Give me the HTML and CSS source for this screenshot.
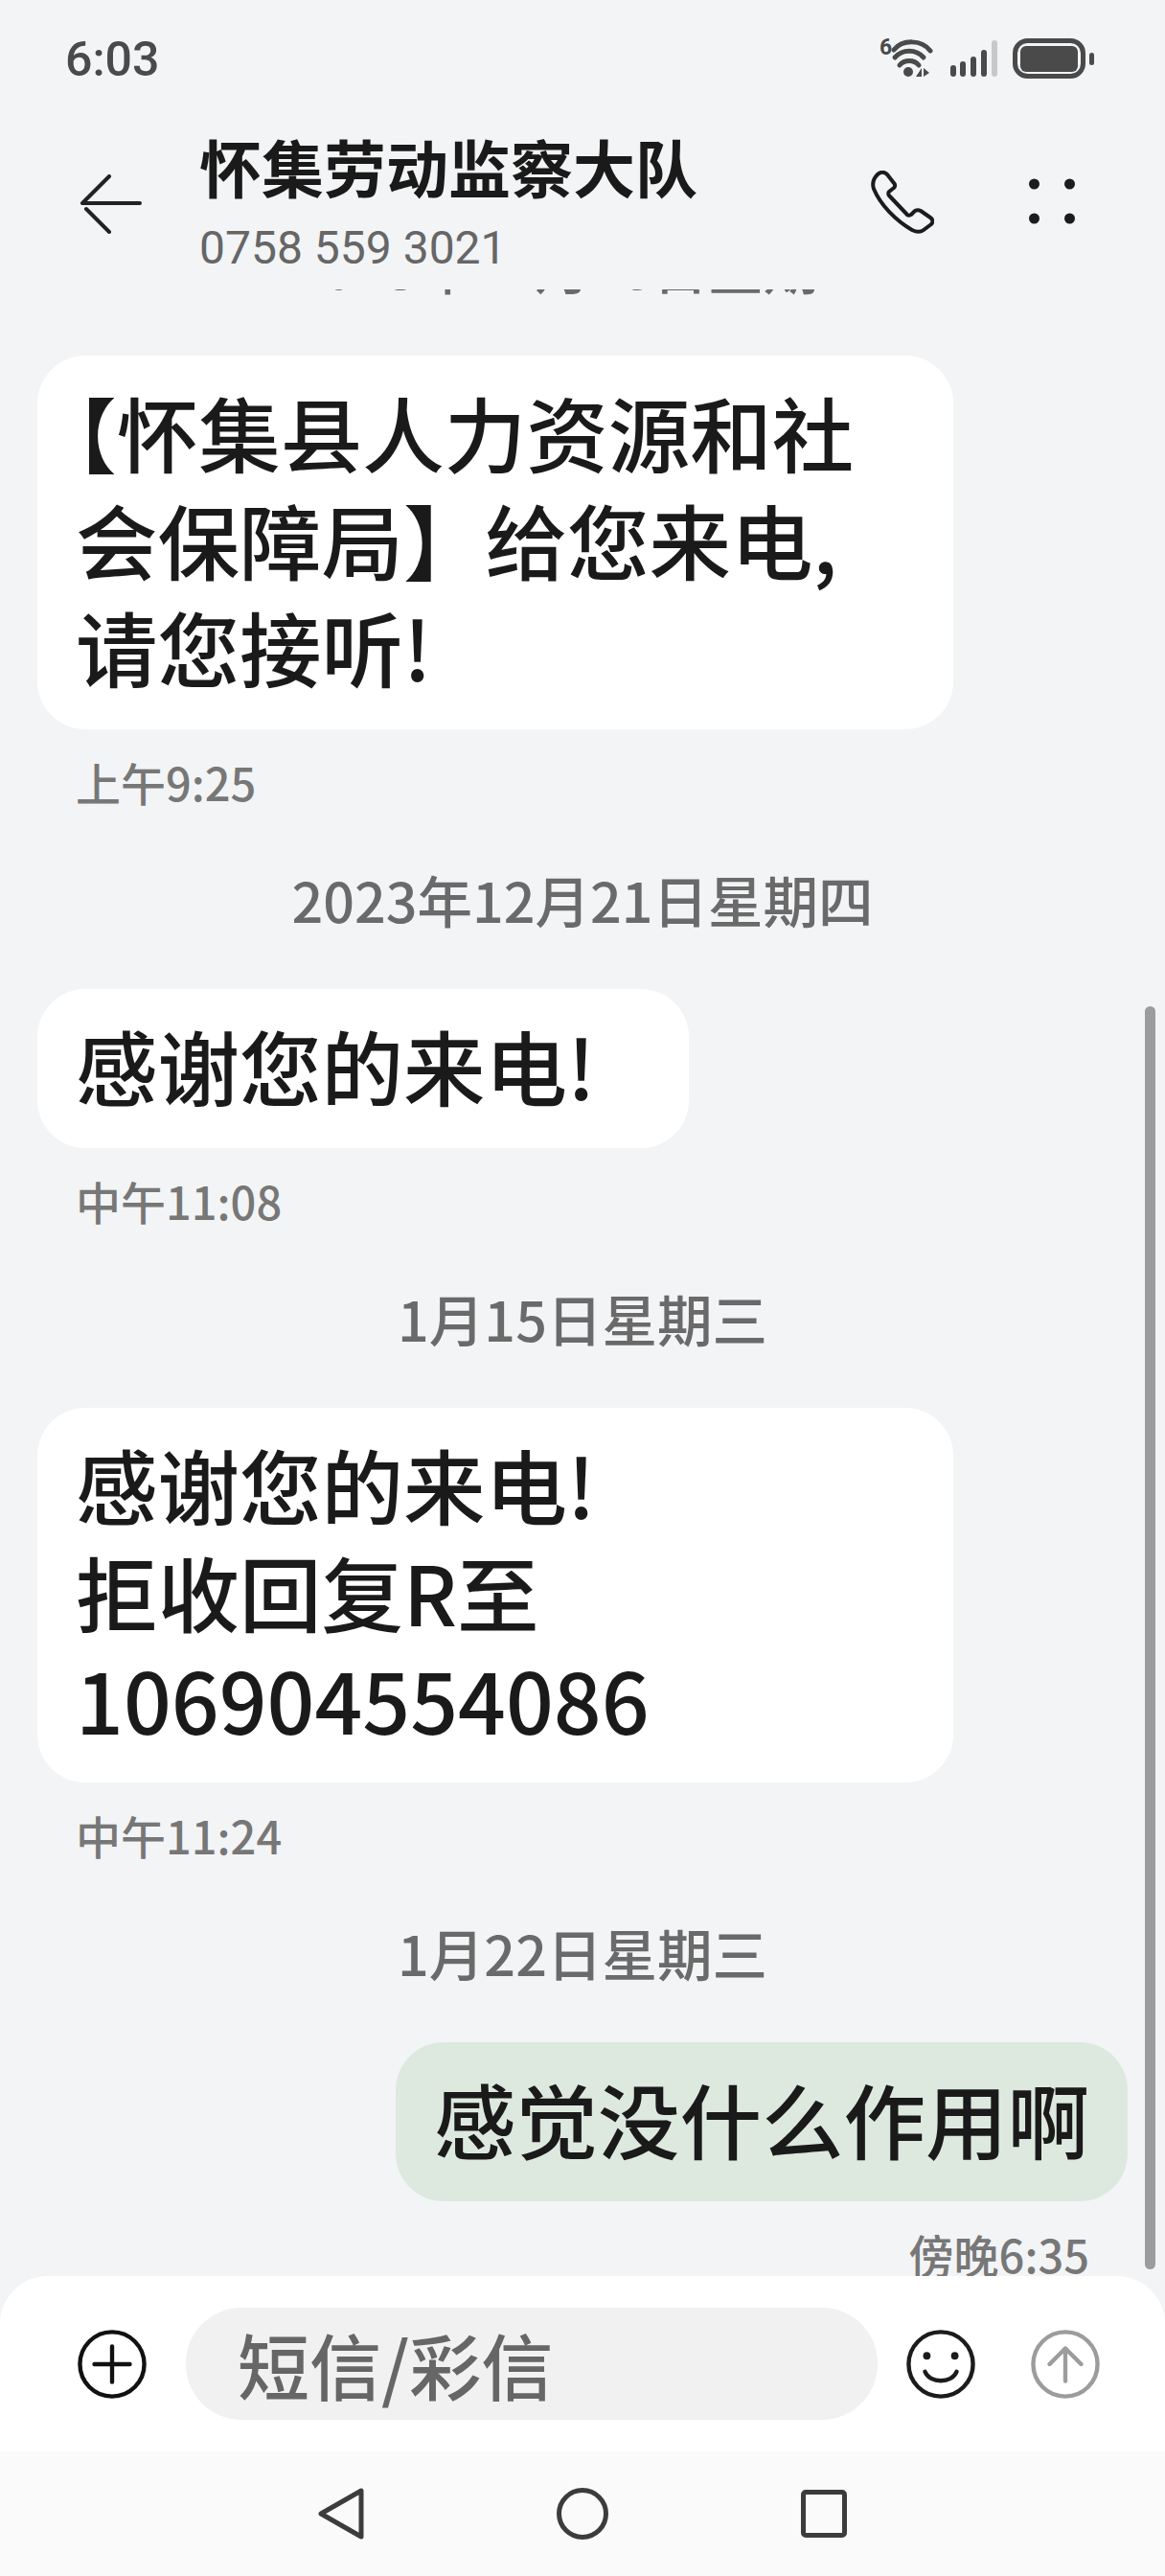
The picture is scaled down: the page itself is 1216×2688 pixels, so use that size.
FILE: index.html
```html
<!DOCTYPE html>
<html lang="zh-CN">
<head>
<meta charset="utf-8">
<title>怀集劳动监察大队</title>
<link rel="stylesheet" href="styles.css">
</head>
<body>
<div class="screen">
  <div class="statusbar">
    <span class="clock">6:03</span>
    <svg class="status-icons" width="232" height="50" viewBox="0 0 232 50">
      <text x="0" y="17" class="net-six">6</text>
      <g fill="none" stroke="#4a4a4a" stroke-width="5" stroke-linecap="round">
        <path d="M15 12 C24 1 44 1 53 13"/>
        <path d="M16 20 C24 11 38 11 46 20"/>
        <path d="M21 28 C26 22 36 22 41 28"/>
      </g>
      <circle cx="30" cy="35" r="5" fill="#4a4a4a"/>
      <path d="M38 40 L44 31 V40 Z M46 31 L52 36 L46 40 Z" fill="#4a4a4a"/>
      <g fill="#4a4a4a">
        <rect x="74" y="28" width="6" height="12" rx="3"/>
        <rect x="84" y="24" width="6" height="16" rx="3"/>
        <rect x="95" y="19" width="6" height="21" rx="3"/>
        <rect x="106" y="12" width="6" height="28" rx="3"/>
      </g>
      <rect x="117" y="2" width="6" height="38" rx="3" fill="#c8c8c8"/>
      <rect x="141.500" y="2.500" width="71" height="37" rx="13" fill="none" stroke="#4a4a4a" stroke-width="5"/>
      <rect x="147" y="8" width="60" height="27" rx="6" fill="#4a4a4a"/>
      <rect x="219" y="15" width="5" height="13" rx="2.500" fill="#4a4a4a"/>
    </svg>
  </div>
  <header class="topbar">
    <svg class="back-icon" width="66" height="62" viewBox="0 0 66 62">
      <path d="M31 2 L3 30 H63 M7 36 L31 60" fill="none" stroke="#222" stroke-width="4" stroke-linecap="round" stroke-linejoin="round"/>
    </svg>
    <div class="contact">
      <div class="contact-name">怀集劳动监察大队</div>
      <div class="contact-number">0758 559 3021</div>
    </div>
    <svg class="phone-icon" width="66" height="66" viewBox="0 0 66 66">
      <path d="M7 4 C10 1 14 1 17 4 L24 13 C26 15 25 17 24 18 L19 22 C18 23 18 25 19 26 L37 45 C38 47 40 47 42 46 L46 42 C48 41 50 41 52 42 L62 49 C65 51 65 54 63 56 L55 62 C51 65 47 64 43 62 C26 52 10 36 3 19 C1 13 3 8 7 4 Z" fill="none" stroke="#1c1c1c" stroke-width="4" stroke-linejoin="round"/>
    </svg>
    <svg class="more-icon" width="48" height="48" viewBox="0 0 48 48">
      <g fill="#1c1c1c">
        <circle cx="5.500" cy="6" r="5.500"/>
        <circle cx="42.500" cy="6" r="5.500"/>
        <circle cx="5.500" cy="42" r="5.500"/>
        <circle cx="42.500" cy="42" r="5.500"/>
      </g>
    </svg>
  </header>
  <main class="thread">
    <div class="date">2023年12月18日星期一</div>
    <div class="bubble bubble-wide">【怀集县人力资源和社<br>会保障局】给您来电,<br>请您接听!</div>
    <div class="time">上午9:25</div>
    <div class="date">2023年12月21日星期四</div>
    <div class="bubble bubble-mid">感谢您的来电!</div>
    <div class="time">中午11:08</div>
    <div class="date">1月15日星期三</div>
    <div class="bubble bubble-wide">感谢您的来电!<br>拒收回复R至<br><span class="digits">106904554086</span></div>
    <div class="time">中午11:24</div>
    <div class="date">1月22日星期三</div>
    <div class="bubble bubble-out">感觉没什么作用啊</div>
    <div class="time time-out">傍晚6:35</div>
  </main>
  <div class="scrollbar"></div>
  <footer class="composer">
    <svg class="composer-icon" width="72" height="72" viewBox="0 0 74 74">
      <circle cx="37" cy="37" r="34.500" fill="none" stroke="#111" stroke-width="4.500"/>
      <path d="M37 18 V56 M18 37 H56" fill="none" stroke="#111" stroke-width="4.500" stroke-linecap="round"/>
    </svg>
    <div class="composer-input">短信/彩信</div>
    <svg class="composer-icon" width="72" height="72" viewBox="0 0 74 74">
      <circle cx="37" cy="37" r="34.500" fill="none" stroke="#1c1c1c" stroke-width="4.500"/>
      <circle cx="22" cy="28" r="4" fill="#1c1c1c"/>
      <circle cx="52" cy="28" r="4" fill="#1c1c1c"/>
      <path d="M20 45 C25 58 49 58 54 45" fill="none" stroke="#1c1c1c" stroke-width="4.500" stroke-linecap="round"/>
    </svg>
    <svg class="composer-icon" width="72" height="72" viewBox="0 0 74 74">
      <circle cx="37" cy="37" r="34.500" fill="none" stroke="#9c9c9c" stroke-width="4.500"/>
      <path d="M37 55 V20 M20 37 L37 20 L54 37" fill="none" stroke="#9c9c9c" stroke-width="4.500" stroke-linecap="round" stroke-linejoin="round"/>
    </svg>
  </footer>
  <nav class="navbar">
    <svg width="48" height="54" viewBox="0 0 48 54">
      <path d="M45 3 V51 L3 27 Z" fill="none" stroke="#3c3c3c" stroke-width="5" stroke-linejoin="round"/>
    </svg>
    <svg width="54" height="54" viewBox="0 0 54 54">
      <circle cx="27" cy="27" r="24.500" fill="none" stroke="#3c3c3c" stroke-width="5"/>
    </svg>
    <svg width="48" height="50" viewBox="0 0 48 50">
      <rect x="2.500" y="2.500" width="43" height="45" rx="2.500" fill="none" stroke="#3c3c3c" stroke-width="5"/>
    </svg>
  </nav>
</div>
</body>
</html>
```
FILE: styles.css
```css
* { box-sizing: border-box; }
html, body { margin: 0; padding: 0; }
body { background: #f3f4f6; font-family: "Noto Sans CJK SC", "Noto Sans", sans-serif; }

.screen {
  position: relative;
  width: 1216px;
  height: 2688px;
  display: flex;
  flex-direction: column;
  overflow: hidden;
  background: #f3f4f6;
}

.statusbar {
  height: 102px;
  flex: none;
  display: flex;
  justify-content: space-between;
  align-items: flex-start;
  padding: 32px 70px 0 68px;
}
.clock {
  font-family: Roboto, sans-serif;
  font-size: 50px;
  font-weight: 500;
  line-height: 60px;
  color: #4a4a4a;
}
.status-icons { margin: 8px -4px 0 0; }
.net-six { font-family: Roboto, sans-serif; font-size: 23px; font-weight: 700; fill: #4a4a4a; }

.topbar {
  height: 200px;
  flex: none;
  display: flex;
  align-items: flex-start;
  padding: 0 94px 0 83px;
}
.back-icon { margin-top: 80px; flex: none; }
.contact { margin-left: 59px; flex: 1; margin-top: 33px; }
.contact-name {
  font-size: 65px;
  font-weight: 700;
  line-height: 76px;
  color: #1a1a1a;
}
.contact-number {
  font-family: Roboto, sans-serif;
  font-size: 48px;
  line-height: 56px;
  color: #666;
  margin-top: 20px;
}
.phone-icon { margin-top: 76px; flex: none; }
.more-icon { margin: 84px 0 0 99px; flex: none; }

.thread {
  flex: 1;
  min-height: 0;
  display: flex;
  flex-direction: column;
  justify-content: flex-end;
  align-items: flex-start;
  overflow: hidden;
  padding: 0 39px;
}
.date {
  align-self: center;
  flex: none;
  font-size: 57.5px;
  font-weight: 500;
  line-height: 72px;
  color: #6a6a6a;
  margin: 58px 0 58px 0;
  white-space: nowrap;
}
.bubble {
  flex: none;
  background: #fff;
  border-radius: 50px;
  padding: 23px 40px 31px;
  font-size: 85.5px;
  font-weight: 500;
  line-height: 112px;
  color: #1a1a1a;
  text-spacing-trim: trim-start;
  white-space: nowrap;
}
.digits { font-size: 87.5px; }
.bubble-wide { width: 956px; }
.bubble-mid { width: 680px; }
.bubble-out {
  align-self: flex-end;
  background: #dde9df;
}
.time {
  flex: none;
  font-size: 47px;
  font-weight: 500;
  line-height: 56px;
  color: #777;
  margin: 27px 0 0 40px;
}
.time-out {
  align-self: flex-end;
  margin: 27px 40px 0 0;
  height: 51px;
}

.scrollbar {
  position: absolute;
  left: 1195px;
  top: 1050px;
  width: 11px;
  height: 1318px;
  border-radius: 6px;
  background: #9c9c9c;
}

.composer {
  height: 183px;
  flex: none;
  display: flex;
  align-items: center;
  background: #fff;
  border-radius: 50px 50px 0 0;
  padding: 0 68px 0 81px;
}
.composer-icon { flex: none; }
.composer-input {
  flex: none;
  width: 722px;
  height: 117px;
  margin: 0 30px 0 41px;
  padding-left: 54px;
  border-radius: 58px;
  background: #f1f1f1;
  font-size: 75px;
  font-weight: 500;
  line-height: 117px;
  color: #666;
}
.composer-icon:last-child { margin-left: 58px; }

.navbar {
  height: 130px;
  flex: none;
  background: #fafafa;
  display: flex;
  align-items: center;
  justify-content: center;
  gap: 201px;
}
```
